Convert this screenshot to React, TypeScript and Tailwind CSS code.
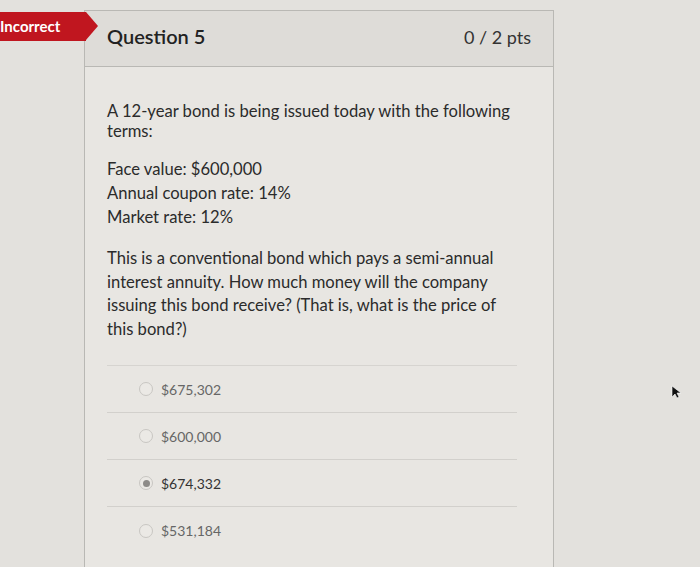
const options = [
  { label: "$675,302", selected: false },
  { label: "$600,000", selected: false },
  { label: "$674,332", selected: true },
  { label: "$531,184", selected: false },
];

export default function App() {
  return (
    <div className="relative w-[700px] h-[567px] overflow-hidden bg-[#e3e1dd] font-['Lato','Noto_Sans',sans-serif] text-[#2d3b45]">
      {/* incorrect badge */}
      <div className="absolute left-0 top-[12px] flex items-stretch h-[29px]">
        <div className="bg-[#c0161f] w-[86px] flex items-center text-white font-bold text-[15px] leading-none">
          Incorrect
        </div>
        <div className="w-0 h-0 border-y-[14.5px] border-y-transparent border-l-[12px] border-l-[#c0161f]" />
      </div>

      <div className="ml-[84px] mt-[10px] w-[470px] h-[600px] border border-[#b9b8b4] bg-[#e8e6e2]">
        <div className="h-[56px] flex items-center justify-between px-[22px] pb-[6px] bg-[#dedcd8] border-b border-[#b9b8b4]">
          <span className="text-[20px] font-semibold text-[#222]">Question 5</span>
          <span className="text-[18px] text-[#333] mt-[3px]">0 / 2 pts</span>
        </div>

        <div className="px-[22px] pt-[34px] text-[16.6px] text-[#2b2b2b]">
          <p className="w-[420px] leading-[20px]">A 12-year bond is being issued today with the following terms:</p>
          <p className="mt-[16px] leading-[24px]">
            Face value: $600,000
            <br />
            Annual coupon rate: 14%
            <br />
            Market rate: 12%
          </p>
          <p className="mt-[18px] w-[410px] leading-[23.5px]">
            This is a conventional bond which pays a semi-annual interest annuity. How much money will the company issuing this bond receive? (That is, what is the price of this bond?)
          </p>

          <div className="mt-[24px] w-[410px] border-t border-[#d6d4d0]">
            {options.map((o) => (
              <div key={o.label} className="h-[47px] flex items-center pl-[32px] gap-[8px] border-b border-[#d2d0cc] last:border-b-0">
                <span className="w-[14px] h-[14px] rounded-full border border-[#c8c6c2] bg-[#ebe9e5] flex items-center justify-center">
                  {o.selected && <span className="w-[7px] h-[7px] rounded-full bg-[#8d8b88]" />}
                </span>
                <span className={o.selected ? "text-[14px] text-[#333]" : "text-[14px] text-[#666]"}>{o.label}</span>
              </div>
            ))}
          </div>
        </div>
      </div>

      {/* cursor */}
      <svg className="absolute left-[671px] top-[385px]" width="10" height="14" viewBox="0 0 10 14">
        <path d="M1 1 L1 12 L4 9 L6 13 L8 12 L6 8 L10 8 Z" fill="#111" stroke="#fff" strokeWidth="0.6" />
      </svg>
    </div>
  );
}
